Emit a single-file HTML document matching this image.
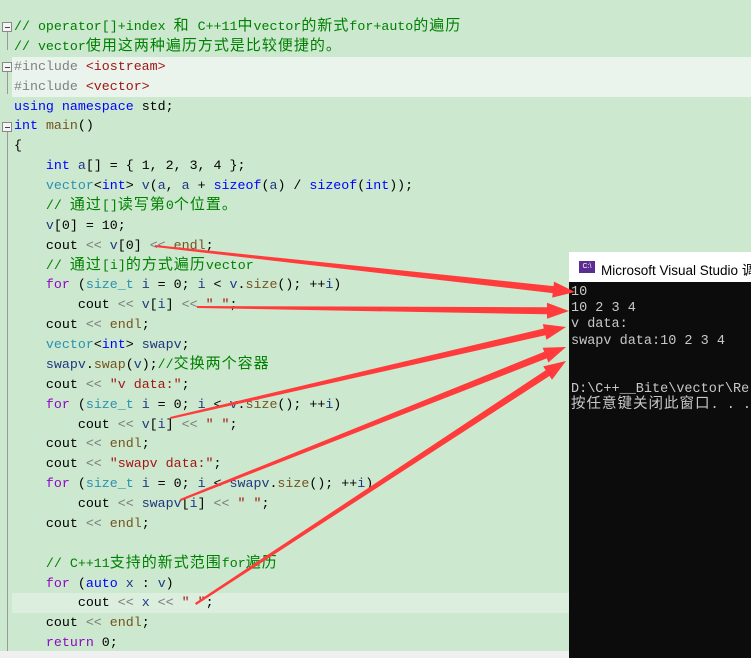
<!DOCTYPE html>
<html><head><meta charset="utf-8"><style>
html,body{margin:0;padding:0}
body{width:751px;height:658px;overflow:hidden;background:#cce8cf;position:relative;font-family:"Liberation Mono","Noto Sans CJK SC",monospace;font-size:13.3px}
.code{position:absolute;left:14px;top:17px;white-space:pre;line-height:19.87px;color:#000}
.c{color:#008000}.k{color:#0000ff}.t{color:#2b91af}.s{color:#a31515}.p{color:#808080}.f{color:#8f08c4}.fn{color:#74531f}.v{color:#1f377f}.o{color:#7a7a7a}
.z{font-family:"Noto Sans CJK SC",sans-serif;font-size:15px;letter-spacing:1px;line-height:0}
.hl{position:absolute;left:12px;right:0}
.fold{position:absolute;left:2px;width:8px;height:8px;border:1px solid #888;background:#f4f4f4}
.fold:after{content:"";position:absolute;left:2px;top:4px;width:5px;height:1px;background:#444}
.con{position:absolute;left:569px;top:252px;width:182px;height:406px;background:#0c0c0c;overflow:hidden}
.title{position:absolute;left:0;top:0;right:0;height:30px;background:#fff;font-family:"Liberation Sans","Noto Sans CJK SC",sans-serif;font-size:13.5px;color:#000;white-space:nowrap}
.ct{position:absolute;left:2px;top:33px;color:#c8c8c8;white-space:pre;line-height:16.2px;font-size:13.5px;font-family:"Liberation Mono","Noto Sans CJK SC",monospace}
.ct .z{font-size:14.5px;letter-spacing:1px}
</style></head><body>
<div class="hl" style="top:57px;height:40px;background:#eaf3ec"></div>
<div class="hl" style="top:593px;height:20px;background:#dcefdf"></div>
<div style="position:absolute;left:7px;top:32px;width:1px;height:18px;background:#999"></div>
<div style="position:absolute;left:7px;top:72px;width:1px;height:22px;background:#999"></div>
<div style="position:absolute;left:7px;top:132px;width:1px;height:520px;background:#999"></div>
<div class="fold" style="top:22px"></div>
<div class="fold" style="top:62px"></div>
<div class="fold" style="top:122px"></div>
<div style="position:absolute;left:0;top:651px;width:569px;height:7px;background:#f0f0f0"></div>
<div class="code"><span class="c">// operator[]+index <span class="z">和</span> C++11<span class="z">中</span>vector<span class="z">的新式</span>for+auto<span class="z">的遍历</span></span>
<span class="c">// vector<span class="z">使用这两种遍历方式是比较便捷的。</span></span>
<span class="p">#include</span> <span class="s">&lt;iostream&gt;</span>
<span class="p">#include</span> <span class="s">&lt;vector&gt;</span>
<span class="k">using</span> <span class="k">namespace</span> std;
<span class="k">int</span> <span class="fn">main</span>()
{
    <span class="k">int</span> <span class="v">a</span>[] = { 1, 2, 3, 4 };
    <span class="t">vector</span>&lt;<span class="k">int</span>&gt; <span class="v">v</span>(<span class="v">a</span>, <span class="v">a</span> + <span class="k">sizeof</span>(<span class="v">a</span>) / <span class="k">sizeof</span>(<span class="k">int</span>));
    <span class="c">// <span class="z">通过</span>[]<span class="z">读写第</span>0<span class="z">个位置。</span></span>
    <span class="v">v</span>[0] = 10;
    cout <span class="o">&lt;&lt;</span> <span class="v">v</span>[0] <span class="o">&lt;&lt;</span> <span class="fn">endl</span>;
    <span class="c">// <span class="z">通过</span>[i]<span class="z">的方式遍历</span>vector</span>
    <span class="f">for</span> (<span class="t">size_t</span> <span class="v">i</span> = 0; <span class="v">i</span> &lt; <span class="v">v</span>.<span class="fn">size</span>(); ++<span class="v">i</span>)
        cout <span class="o">&lt;&lt;</span> <span class="v">v</span>[<span class="v">i</span>] <span class="o">&lt;&lt;</span> <span class="s">" "</span>;
    cout <span class="o">&lt;&lt;</span> <span class="fn">endl</span>;
    <span class="t">vector</span>&lt;<span class="k">int</span>&gt; <span class="v">swapv</span>;
    <span class="v">swapv</span>.<span class="fn">swap</span>(<span class="v">v</span>);<span class="c">//<span class="z">交换两个容器</span></span>
    cout <span class="o">&lt;&lt;</span> <span class="s">"v data:"</span>;
    <span class="f">for</span> (<span class="t">size_t</span> <span class="v">i</span> = 0; <span class="v">i</span> &lt; <span class="v">v</span>.<span class="fn">size</span>(); ++<span class="v">i</span>)
        cout <span class="o">&lt;&lt;</span> <span class="v">v</span>[<span class="v">i</span>] <span class="o">&lt;&lt;</span> <span class="s">" "</span>;
    cout <span class="o">&lt;&lt;</span> <span class="fn">endl</span>;
    cout <span class="o">&lt;&lt;</span> <span class="s">"swapv data:"</span>;
    <span class="f">for</span> (<span class="t">size_t</span> <span class="v">i</span> = 0; <span class="v">i</span> &lt; <span class="v">swapv</span>.<span class="fn">size</span>(); ++<span class="v">i</span>)
        cout <span class="o">&lt;&lt;</span> <span class="v">swapv</span>[<span class="v">i</span>] <span class="o">&lt;&lt;</span> <span class="s">" "</span>;
    cout <span class="o">&lt;&lt;</span> <span class="fn">endl</span>;

    <span class="c">// C++11<span class="z">支持的新式范围</span>for<span class="z">遍历</span></span>
    <span class="f">for</span> (<span class="k">auto</span> <span class="v">x</span> : <span class="v">v</span>)
        cout <span class="o">&lt;&lt;</span> <span class="v">x</span> <span class="o">&lt;&lt;</span> <span class="s">" "</span>;
    cout <span class="o">&lt;&lt;</span> <span class="fn">endl</span>;
    <span class="f">return</span> 0;
</div>
<div class="con">
<div class="title"><div style="position:absolute;left:10px;top:9px;width:16px;height:12px;background:#5c2d91;color:#fff;font-size:7px;line-height:12px;text-align:center">C:\</div><span style="position:absolute;left:32px;top:7px">Microsoft Visual Studio 调试控制台</span></div>
<div class="ct">10
10 2 3 4
v data:
swapv data:10 2 3 4


D:\C++__Bite\vector\Release
<span class="z">按任意键关闭此窗口</span>. . .</div>
</div>
<svg width="751" height="658" style="position:absolute;left:0;top:0">
<g fill="#ff3b3b">
<polygon points="155,245 553.5,286.1 554,281.6 575,292 552.2,297.6 552.7,293.1 155,247"/>
<polygon points="197,306 547,307.3 547,302.8 569,311 547,318.8 547,314.3 197,308"/>
<polygon points="170,417 543.8,328.5 542.8,324.1 566,327 546.4,339.7 545.4,335.3 170.5,419"/>
<polygon points="180,499 544.2,351.8 542.6,347.7 566,347 548.4,362.5 546.8,358.4 180.8,501"/>
<polygon points="195,603 545.7,370.2 543.2,366.4 566,361 552,379.8 549.5,376 196.2,605"/>
</g>
</svg>
</body></html>
